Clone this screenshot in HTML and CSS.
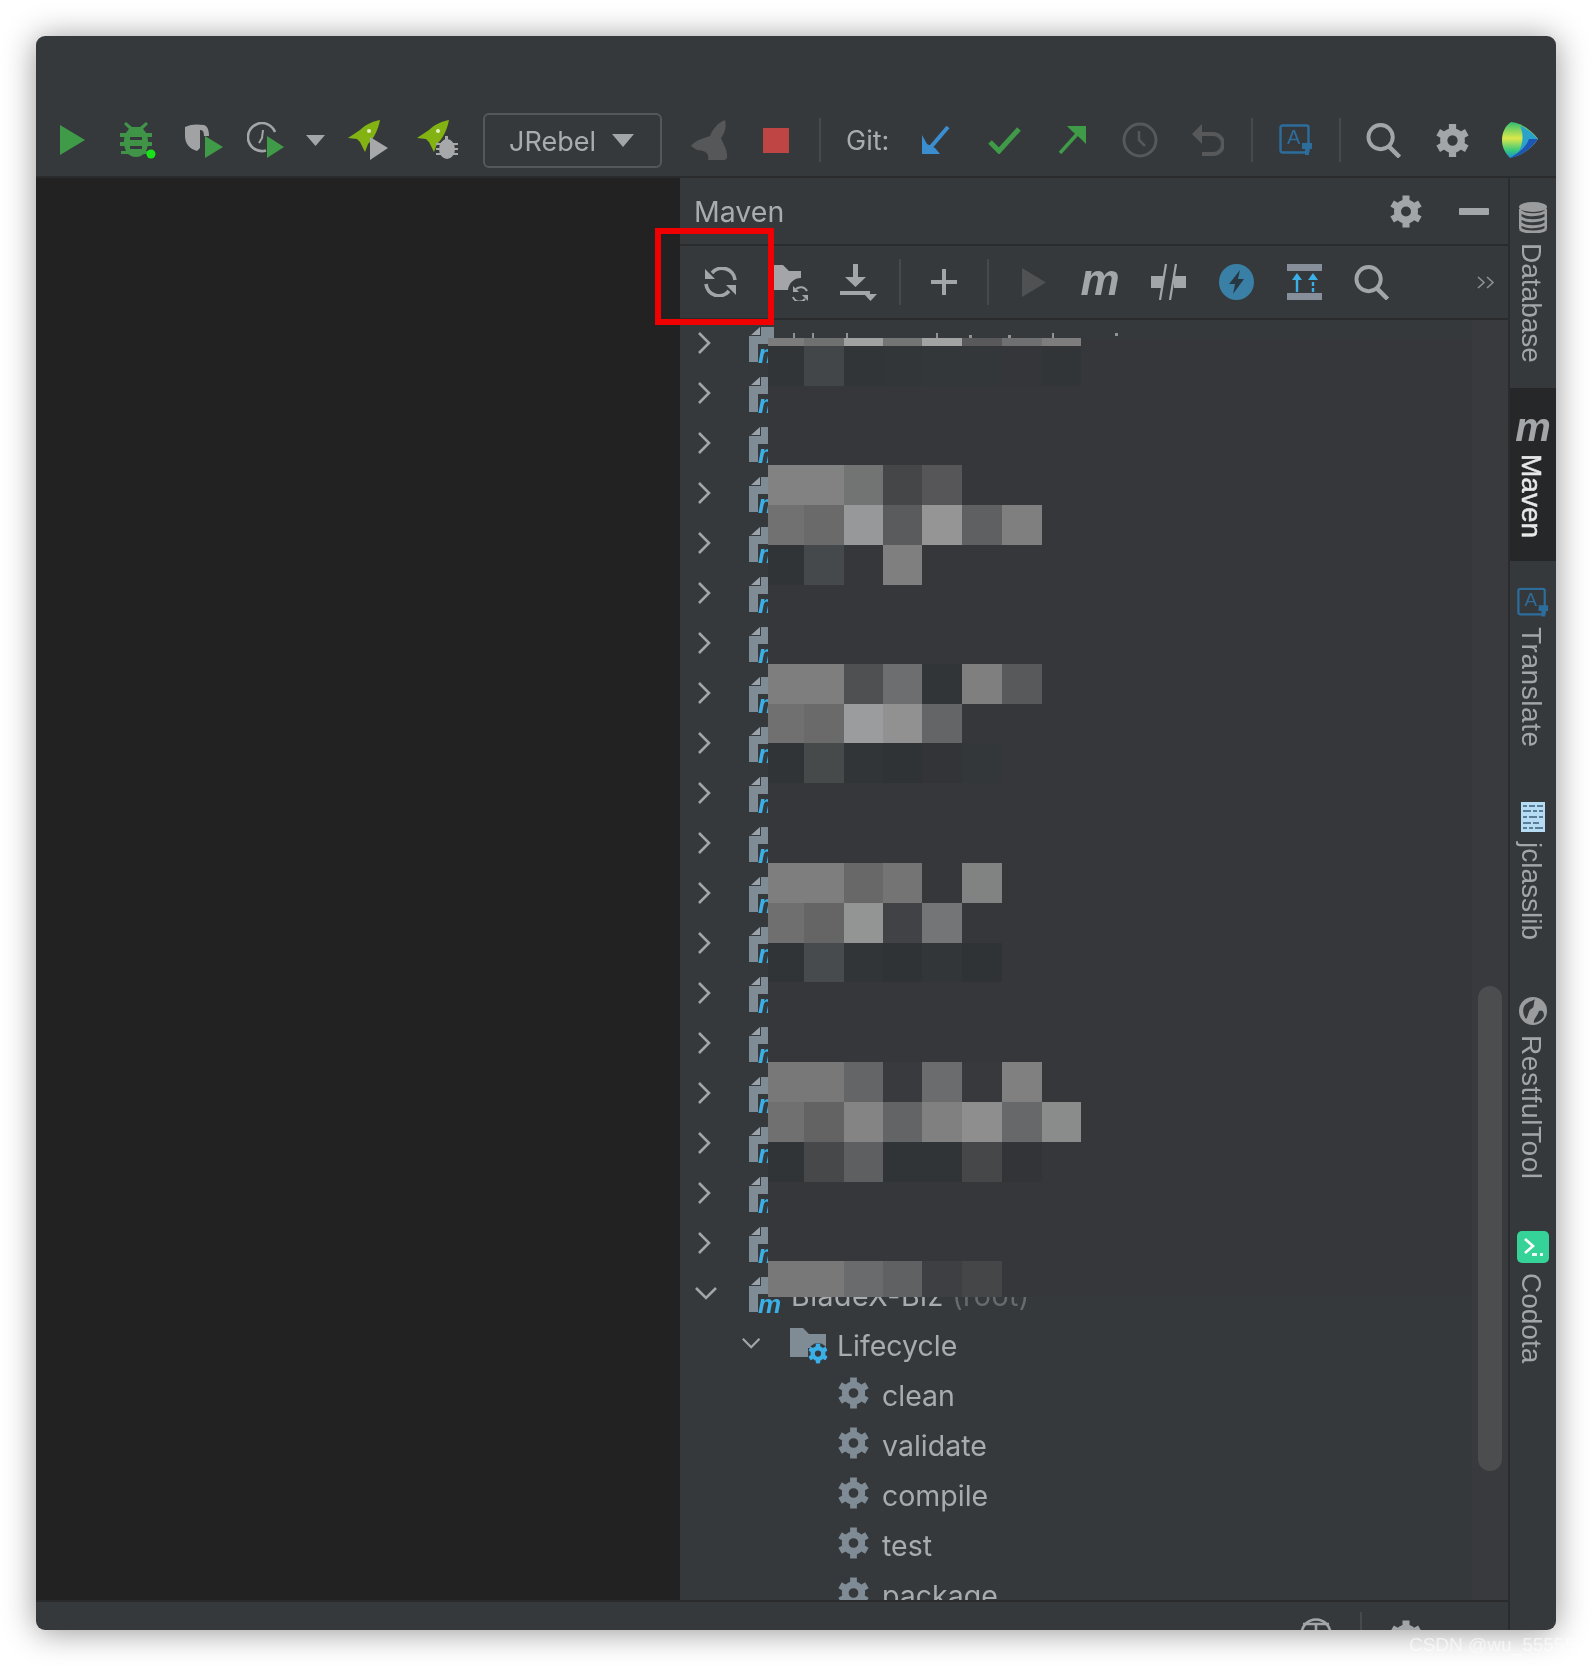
FILE: index.html
```html
<!DOCTYPE html>
<html lang="en">
<head>
<meta charset="utf-8">
<title>Maven</title>
<link rel="stylesheet" href="styles.css">
</head>
<body>
<svg class="defs" aria-hidden="true">
  <symbol id="gear" viewBox="0 0 32 32">
    <circle cx="16" cy="16" r="8.5" fill="none" stroke="currentColor" stroke-width="7"/>
    <g fill="currentColor">
      <rect x="12.5" y="0" width="7" height="8"/>
      <rect x="12.5" y="0" width="7" height="8" transform="rotate(60 16 16)"/>
      <rect x="12.5" y="0" width="7" height="8" transform="rotate(120 16 16)"/>
      <rect x="12.5" y="0" width="7" height="8" transform="rotate(180 16 16)"/>
      <rect x="12.5" y="0" width="7" height="8" transform="rotate(240 16 16)"/>
      <rect x="12.5" y="0" width="7" height="8" transform="rotate(300 16 16)"/>
    </g>
  </symbol>
  <symbol id="search" viewBox="0 0 36 36">
    <circle cx="14.5" cy="14.5" r="12.5" fill="none" stroke="currentColor" stroke-width="4"/>
    <path d="M23 24 L34 35" stroke="currentColor" stroke-width="4.5" fill="none"/>
  </symbol>
  <symbol id="chev" viewBox="0 0 24 24">
    <path d="M4 2 L14 12 L4 22" fill="none" stroke="#a3a6a8" stroke-width="2.6"/>
  </symbol>
  <symbol id="chevd" viewBox="0 0 24 24">
    <path d="M1 7 L11 17 L21 7" fill="none" stroke="#a3a6a8" stroke-width="2.6"/>
  </symbol>
  <symbol id="mod" viewBox="0 0 34 38">
    <path d="M0 10 H12 V1 H25 V18 H9 V36 H0Z" fill="#7f8b95"/>
    <path d="M2 9 L11 1 V9Z" fill="#9aa3ab"/>
  </symbol>
  <symbol id="translate" viewBox="0 0 34 32">
    <rect x="1.5" y="1.5" width="28" height="27" rx="2" fill="none" stroke="currentColor" stroke-width="2.4"/>
    <path d="M23 19 H33 V25 H30 V31 H26 V25 H23Z" fill="currentColor"/>
  </symbol>
</svg>

<main class="window">
  <header class="toolbar">
    <span class="btn"><svg width="25" height="30" viewBox="0 0 25 30"><path d="M0 0 L25 15 L0 30Z" fill="#3f9b47"/></svg></span>
    <span class="btn"><svg width="37" height="37" viewBox="0 0 37 37">
      <g fill="#3f9448">
        <path d="M6 0 L12 5 H20 L26 0 L28 2 L23 7 C26 10 28 14 28 20 C28 29 23 35 16 35 C9 35 4 29 4 20 C4 14 6 10 9 7 L4 2Z"/>
        <rect x="0" y="11" width="32" height="4"/><rect x="0" y="20" width="32" height="4"/><rect x="1" y="29" width="30" height="3"/>
      </g>
      <rect x="10" y="15" width="12" height="3" fill="#36393c"/><rect x="10" y="24" width="12" height="3" fill="#36393c"/>
      <circle cx="31" cy="32" r="4.5" fill="#17e317"/>
    </svg></span>
    <span class="btn"><svg width="38" height="36" viewBox="0 0 38 36">
      <path d="M0 5 C6 2 12 2 19 3 C22 4 24 7 24 14 H19 C19 10 18 8 15 8 V26 L12 29 C5 27 0 22 0 14Z" fill="#a0a2a4"/>
      <path d="M20 14 L38 25 L20 36Z" fill="#3f9b47"/>
    </svg></span>
    <span class="btn btn-profiler"><svg width="38" height="36" viewBox="0 0 38 36">
      <path d="M28 10 A14 14 0 1 0 19 28.5" fill="none" stroke="#a3a6a8" stroke-width="2.6"/>
      <path d="M16 8 L15 16 L12 21" fill="none" stroke="#a3a6a8" stroke-width="2"/>
      <path d="M20 14 L37 25 L20 36Z" fill="#3f9b47"/>
    </svg></span>
    <span class="btn btn-arrow"><svg width="19" height="11" viewBox="0 0 19 11"><path d="M0 0 H19 L9.500 11Z" fill="#a3a6a8"/></svg></span>
    <span class="btn"><svg width="40" height="40" viewBox="0 0 40 40">
      <path d="M32 0 C26 1 18 4 12 10 L0 18 L9 19 L12 22 L17 32 L20 24 C26 18 30 10 32 0Z" fill="#82b312"/>
      <circle cx="21" cy="11" r="2" fill="#e6f0c8"/>
      <path d="M22 17 L40 28 L22 40Z" fill="#a6a8aa"/>
    </svg></span>
    <span class="btn btn-wide"><svg width="41" height="40" viewBox="0 0 41 40">
      <path d="M32 0 C26 1 18 4 12 10 L0 18 L9 19 L12 22 L17 32 L20 24 C26 18 30 10 32 0Z" fill="#82b312"/>
      <circle cx="21" cy="11" r="2" fill="#e6f0c8"/>
      <g fill="#a6a8aa"><rect x="28" y="16" width="3" height="4"/><ellipse cx="30" cy="29" rx="8" ry="10"/><rect x="19" y="23" width="22" height="2"/><rect x="19" y="28" width="22" height="2"/><rect x="19" y="33" width="22" height="2"/></g>
    </svg></span>
    <div class="combo"><span class="combo-text">JRebel</span><svg width="22" height="13" viewBox="0 0 22 13"><path d="M0 0 H22 L11 13Z" fill="#a3a6a8"/></svg></div>
    <span class="btn btn-rabbit"><svg width="37" height="40" viewBox="0 0 37 40"><path d="M34 0 C36 8 33 14 30 18 C32 24 37 30 36 38 L34 40 H17 C19 34 14 30 6 30 L0 26 C4 20 14 18 19 16 C22 8 28 2 34 0Z" fill="#565758"/></svg></span>
    <span class="btn btn-68"><span class="stop"></span></span>
    <span class="sep"></span>
    <span class="git">Git:</span>
    <span class="btn btn-68"><svg width="28" height="28" viewBox="0 0 28 28"><path d="M26 1 L8 22" stroke="#3a8ecf" stroke-width="4" fill="none"/><path d="M0 9 L5 18 L13 22 L18 28 H0Z" fill="#3a8ecf"/></svg></span>
    <span class="btn btn-68"><svg width="33" height="27" viewBox="0 0 33 27"><path d="M2 15 L11 24 L31 2" stroke="#3f9b47" stroke-width="5" fill="none"/></svg></span>
    <span class="btn btn-68"><svg width="28" height="28" viewBox="0 0 28 28"><path d="M2 27 L21 6" stroke="#3f9b47" stroke-width="3.500" fill="none"/><path d="M9 0 H28 V18 L22 12 L15 6Z" fill="#3f9b47"/></svg></span>
    <span class="btn btn-68"><svg width="36" height="36" viewBox="0 0 36 36"><circle cx="18" cy="18" r="16" fill="none" stroke="#565859" stroke-width="3"/><path d="M17 9 V18 L23 24" stroke="#565859" stroke-width="2.500" fill="none"/></svg></span>
    <span class="btn btn-68"><svg width="32" height="32" viewBox="0 0 32 32"><path d="M5 10 H21 A10 10 0 0 1 21 30 H10" fill="none" stroke="#565859" stroke-width="4"/><path d="M10 0 V20 L0 10Z" fill="#565859"/></svg></span>
    <span class="sep sep-a"></span>
    <span class="btn btn-68 c-trans"><svg width="34" height="32" viewBox="0 0 34 32"><use href="#translate"/><text x="8" y="20" class="tr-a">A</text></svg></span>
    <span class="sep sep-a"></span>
    <span class="btn btn-68 c-gray"><svg width="36" height="35"><use href="#search"/></svg></span>
    <span class="btn btn-68 c-gray"><svg width="33" height="33"><use href="#gear"/></svg></span>
    <span class="btn btn-68"><svg width="36" height="36" viewBox="0 0 36 36">
      <defs><linearGradient id="lg" x1="0" y1="0" x2="0" y2="1"><stop offset="0" stop-color="#2fbf71"/><stop offset=".45" stop-color="#dbe84a"/><stop offset=".8" stop-color="#35c77e"/><stop offset="1" stop-color="#1f8fd0"/></linearGradient></defs>
      <path d="M9 0 C20 1 30 9 36 17 C30 26 20 34 8 36 C2 30 0 24 0 18 C0 11 3 4 9 0Z" fill="url(#lg)"/>
      <path d="M18 4 C25 6 31 11 36 17 L14 34 C20 26 23 14 18 4Z" fill="#2ba3c9"/>
      <path d="M36 17 C30 26 20 34 8 36 C14 32 24 26 27 17Z" fill="#1f55b4"/>
    </svg></span>
  </header>

  <div class="body">
    <div class="col">
      <div class="panels">
        <div class="editor"></div>
        <section class="maven">
          <div class="maven-head">
            <h1 class="maven-title">Maven</h1>
            <svg class="head-gear" width="32" height="33"><use href="#gear"/></svg>
            <span class="minimize"></span>
          </div>
          <div class="maven-tools">
            <span class="tool tool-first"><svg width="33" height="30" viewBox="0 0 33 30">
              <path d="M31 13 A13 13 0 0 0 8 6" fill="none" stroke="#a3a6a8" stroke-width="3.600"/><path d="M1 2 V12 H11Z" fill="#a3a6a8"/>
              <path d="M2 17 A13 13 0 0 0 25 24" fill="none" stroke="#a3a6a8" stroke-width="3.600"/><path d="M32 28 V18 H22Z" fill="#a3a6a8"/>
            </svg></span>
            <span class="tool tool-folder"><svg width="36" height="37" viewBox="0 0 36 37">
              <path d="M0 1 H9 L15 7 H27 V14 A13 13 0 0 0 14 26 H0Z" fill="#a3a5a8"/>
              <path d="M33 27 A7 7 0 0 0 22 25" fill="none" stroke="#a3a6a8" stroke-width="2"/><path d="M19 22 V28 H25Z" fill="#a3a6a8"/>
              <path d="M19 33 A7 7 0 0 0 31 35" fill="none" stroke="#a3a6a8" stroke-width="2"/><path d="M34 37 V31 H28Z" fill="#a3a6a8"/>
            </svg></span>
            <span class="tool tool-dl"><svg width="37" height="37" viewBox="0 0 37 37" class="ic-fill">
              <rect x="13" y="0" width="5" height="17"/><path d="M5 13 H26 L15.500 23Z"/><rect x="0" y="27" width="30" height="4"/><path d="M24 30 H37 L30.500 37Z"/>
            </svg></span>
            <span class="sep-2"></span>
            <span class="tool tool-plus"><svg width="26" height="26" viewBox="0 0 26 26" class="ic-fill"><rect x="11" y="0" width="4" height="26"/><rect x="0" y="11" width="26" height="4"/></svg></span>
            <span class="sep-2"></span>
            <span class="tool tool-play"><svg width="24" height="29" viewBox="0 0 24 29"><path d="M0 0 L24 14.500 L0 29Z" fill="#505153"/></svg></span>
            <span class="tool"><span class="italic-m">m</span></span>
            <span class="tool"><svg width="35" height="36" viewBox="0 0 35 36" class="ic-fill">
              <rect x="0" y="12" width="12" height="12"/><rect x="23" y="12" width="12" height="12"/>
              <path d="M9 36 L15 0 M19 36 L25 0" stroke="#a3a6a8" stroke-width="2.200" fill="none"/>
            </svg></span>
            <span class="tool"><svg width="35" height="36" viewBox="0 0 35 36"><ellipse cx="17.500" cy="18" rx="17.500" ry="18" fill="#3a80a6"/><path d="M21 6 L10 20 H16 L14 30 L25 15 H19Z" fill="#283843"/></svg></span>
            <span class="tool"><svg width="35" height="36" viewBox="0 0 35 36">
              <rect width="35" height="7" fill="#87909a"/><rect y="29" width="35" height="7" fill="#87909a"/>
              <path d="M10 28 V14" stroke="#3bb0e6" stroke-width="2.400"/><path d="M5 16 H15 L10 9Z" fill="#3bb0e6"/>
              <path d="M26 28 V14" stroke="#3bb0e6" stroke-width="2.400" stroke-dasharray="4 2"/><path d="M21 16 H31 L26 9Z" fill="#3bb0e6"/>
            </svg></span>
            <span class="tool c-gray"><svg width="36" height="35"><use href="#search"/></svg></span>
            <svg class="more" width="18" height="13" viewBox="0 0 18 13"><path d="M1 1 L7 6.500 L1 12 M10 1 L16 6.500 L10 12" fill="none" stroke="#8e9193" stroke-width="1.600"/></svg>
          </div>
          <div class="tree">
            <ul class="rows">
              <li class="row"><svg class="chev"><use href="#chev"/></svg><svg class="mod"><use href="#mod"/></svg><span class="m">m</span></li>
              <li class="row"><svg class="chev"><use href="#chev"/></svg><svg class="mod"><use href="#mod"/></svg><span class="m">m</span></li>
              <li class="row"><svg class="chev"><use href="#chev"/></svg><svg class="mod"><use href="#mod"/></svg><span class="m">m</span></li>
              <li class="row"><svg class="chev"><use href="#chev"/></svg><svg class="mod"><use href="#mod"/></svg><span class="m">m</span></li>
              <li class="row"><svg class="chev"><use href="#chev"/></svg><svg class="mod"><use href="#mod"/></svg><span class="m">m</span></li>
              <li class="row"><svg class="chev"><use href="#chev"/></svg><svg class="mod"><use href="#mod"/></svg><span class="m">m</span></li>
              <li class="row"><svg class="chev"><use href="#chev"/></svg><svg class="mod"><use href="#mod"/></svg><span class="m">m</span></li>
              <li class="row"><svg class="chev"><use href="#chev"/></svg><svg class="mod"><use href="#mod"/></svg><span class="m">m</span></li>
              <li class="row"><svg class="chev"><use href="#chev"/></svg><svg class="mod"><use href="#mod"/></svg><span class="m">m</span></li>
              <li class="row"><svg class="chev"><use href="#chev"/></svg><svg class="mod"><use href="#mod"/></svg><span class="m">m</span></li>
              <li class="row"><svg class="chev"><use href="#chev"/></svg><svg class="mod"><use href="#mod"/></svg><span class="m">m</span></li>
              <li class="row"><svg class="chev"><use href="#chev"/></svg><svg class="mod"><use href="#mod"/></svg><span class="m">m</span></li>
              <li class="row"><svg class="chev"><use href="#chev"/></svg><svg class="mod"><use href="#mod"/></svg><span class="m">m</span></li>
              <li class="row"><svg class="chev"><use href="#chev"/></svg><svg class="mod"><use href="#mod"/></svg><span class="m">m</span></li>
              <li class="row"><svg class="chev"><use href="#chev"/></svg><svg class="mod"><use href="#mod"/></svg><span class="m">m</span></li>
              <li class="row"><svg class="chev"><use href="#chev"/></svg><svg class="mod"><use href="#mod"/></svg><span class="m">m</span></li>
              <li class="row"><svg class="chev"><use href="#chev"/></svg><svg class="mod"><use href="#mod"/></svg><span class="m">m</span></li>
              <li class="row"><svg class="chev"><use href="#chev"/></svg><svg class="mod"><use href="#mod"/></svg><span class="m">m</span></li>
              <li class="row"><svg class="chev"><use href="#chev"/></svg><svg class="mod"><use href="#mod"/></svg><span class="m">m</span></li>
              <li class="row"><svg class="chev"><use href="#chevd"/></svg><svg class="mod"><use href="#mod"/></svg><span class="m">m</span><span class="label label-root">BladeX-Biz <span class="dim">(root)</span></span></li>
              <li class="row row-l1"><svg class="chev chev-l1"><use href="#chevd"/></svg><svg class="folder" width="38" height="36" viewBox="0 0 38 36"><path d="M0 0 H13 L19 6 H36 V20 H18 V29 H0Z" fill="#7f8b95"/></svg><svg class="folder-gear" width="20" height="21"><use href="#gear"/></svg><span class="label label-l1">Lifecycle</span></li>
              <li class="row row-l2"><svg class="task" width="31" height="32"><use href="#gear"/></svg><span class="label label-l2">clean</span></li>
              <li class="row row-l2"><svg class="task" width="31" height="32"><use href="#gear"/></svg><span class="label label-l2">validate</span></li>
              <li class="row row-l2"><svg class="task" width="31" height="32"><use href="#gear"/></svg><span class="label label-l2">compile</span></li>
              <li class="row row-l2"><svg class="task" width="31" height="32"><use href="#gear"/></svg><span class="label label-l2">test</span></li>
              <li class="row row-l2"><svg class="task" width="31" height="32"><use href="#gear"/></svg><span class="label label-l2">package</span></li>
            </ul>
            <div class="track"><div class="thumb"></div></div>
            <svg class="mosaic" width="704" height="959" viewBox="0 0 704 959">
              <rect width="704" height="959" fill="#36373b"/>
              <g fill="#919293"><rect x="25" y="-5" width="2" height="5"/><rect x="44" y="-5" width="2" height="5"/><rect x="78" y="-5" width="2" height="5"/><rect x="168" y="-5" width="2" height="5"/><rect x="201" y="-3" width="3" height="3"/><rect x="240" y="-3" width="3" height="3"/><rect x="284" y="-5" width="2" height="5"/><rect x="347" y="-5" width="3" height="3"/></g>
              <g>
                <rect x="0" y="0" width="36" height="8" fill="#7c7c7c"/><rect x="36" y="0" width="40" height="8" fill="#6f7070"/><rect x="76" y="0" width="39" height="8" fill="#a0a1a1"/><rect x="115" y="0" width="39" height="8" fill="#737474"/><rect x="154" y="0" width="40" height="8" fill="#a2a3a3"/><rect x="194" y="0" width="40" height="8" fill="#59595b"/><rect x="234" y="0" width="40" height="8" fill="#6f7071"/><rect x="274" y="0" width="39" height="8" fill="#7d7d7e"/>
                <rect x="0" y="8" width="36" height="40" fill="#323537"/><rect x="36" y="8" width="40" height="40" fill="#434648"/><rect x="76" y="8" width="39" height="40" fill="#323537"/><rect x="115" y="8" width="39" height="40" fill="#333638"/><rect x="154" y="8" width="40" height="40" fill="#34373a"/><rect x="194" y="8" width="40" height="40" fill="#34373a"/><rect x="234" y="8" width="40" height="40" fill="#35363a"/><rect x="274" y="8" width="39" height="40" fill="#323537"/>
              </g>
              <g>
                <rect x="0" y="127" width="76" height="40" fill="#828282"/><rect x="76" y="127" width="39" height="40" fill="#727373"/><rect x="115" y="127" width="39" height="40" fill="#454648"/><rect x="154" y="127" width="40" height="40" fill="#565658"/>
                <rect x="0" y="167" width="36" height="40" fill="#717171"/><rect x="36" y="167" width="40" height="40" fill="#6a6a6a"/><rect x="76" y="167" width="39" height="40" fill="#979899"/><rect x="115" y="167" width="39" height="40" fill="#5a5b5d"/><rect x="154" y="167" width="40" height="40" fill="#959596"/><rect x="194" y="167" width="40" height="40" fill="#5f6062"/><rect x="234" y="167" width="40" height="40" fill="#7f7f7f"/>
                <rect x="0" y="207" width="36" height="40" fill="#313437"/><rect x="36" y="207" width="40" height="40" fill="#45494b"/><rect x="76" y="207" width="39" height="40" fill="#35373a"/><rect x="115" y="207" width="39" height="40" fill="#7f7f7f"/>
              </g>
              <g>
                <rect x="0" y="326" width="76" height="40" fill="#7e7e7e"/><rect x="76" y="326" width="39" height="40" fill="#4f5052"/><rect x="115" y="326" width="39" height="40" fill="#6d6e6f"/><rect x="154" y="326" width="40" height="40" fill="#323538"/><rect x="194" y="326" width="40" height="40" fill="#7f7f80"/><rect x="234" y="326" width="40" height="40" fill="#58595b"/>
                <rect x="0" y="366" width="36" height="39" fill="#707070"/><rect x="36" y="366" width="40" height="39" fill="#6a6a6b"/><rect x="76" y="366" width="39" height="39" fill="#9b9c9d"/><rect x="115" y="366" width="39" height="39" fill="#909190"/><rect x="154" y="366" width="40" height="39" fill="#646567"/>
                <rect x="0" y="405" width="36" height="40" fill="#313437"/><rect x="36" y="405" width="40" height="40" fill="#464a4b"/><rect x="76" y="405" width="39" height="40" fill="#323538"/><rect x="115" y="405" width="39" height="40" fill="#303336"/><rect x="154" y="405" width="40" height="40" fill="#323438"/><rect x="194" y="405" width="40" height="40" fill="#34373a"/>
              </g>
              <g>
                <rect x="0" y="525" width="76" height="40" fill="#7e7e7e"/><rect x="76" y="525" width="39" height="40" fill="#686869"/><rect x="115" y="525" width="39" height="40" fill="#747475"/><rect x="154" y="525" width="40" height="40" fill="#35373a"/><rect x="194" y="525" width="40" height="40" fill="#818282"/>
                <rect x="0" y="565" width="36" height="40" fill="#6f6f70"/><rect x="36" y="565" width="40" height="40" fill="#656566"/><rect x="76" y="565" width="39" height="40" fill="#939494"/><rect x="115" y="565" width="39" height="40" fill="#414245"/><rect x="154" y="565" width="40" height="40" fill="#747576"/>
                <rect x="0" y="605" width="36" height="39" fill="#313437"/><rect x="36" y="605" width="40" height="39" fill="#474b4d"/><rect x="76" y="605" width="39" height="39" fill="#323538"/><rect x="115" y="605" width="39" height="39" fill="#303336"/><rect x="154" y="605" width="40" height="39" fill="#333639"/><rect x="194" y="605" width="40" height="39" fill="#303336"/>
              </g>
              <g>
                <rect x="0" y="724" width="76" height="40" fill="#787878"/><rect x="76" y="724" width="39" height="40" fill="#646566"/><rect x="115" y="724" width="39" height="40" fill="#383a3d"/><rect x="154" y="724" width="40" height="40" fill="#6b6c6d"/><rect x="194" y="724" width="40" height="40" fill="#38393c"/><rect x="234" y="724" width="40" height="40" fill="#808080"/>
                <rect x="0" y="764" width="36" height="40" fill="#707070"/><rect x="36" y="764" width="40" height="40" fill="#636364"/><rect x="76" y="764" width="39" height="40" fill="#848485"/><rect x="115" y="764" width="39" height="40" fill="#636465"/><rect x="154" y="764" width="40" height="40" fill="#808080"/><rect x="194" y="764" width="40" height="40" fill="#8e8e8e"/><rect x="234" y="764" width="40" height="40" fill="#676869"/><rect x="274" y="764" width="39" height="40" fill="#8a8b8b"/>
                <rect x="0" y="804" width="36" height="40" fill="#313437"/><rect x="36" y="804" width="40" height="40" fill="#47484a"/><rect x="76" y="804" width="39" height="40" fill="#5e5f60"/><rect x="115" y="804" width="39" height="40" fill="#313437"/><rect x="154" y="804" width="40" height="40" fill="#313437"/><rect x="194" y="804" width="40" height="40" fill="#464749"/><rect x="234" y="804" width="40" height="40" fill="#323437"/><rect x="274" y="804" width="80" height="40" fill="#35373a"/>
              </g>
              <g>
                <rect x="0" y="923" width="76" height="36" fill="#787878"/><rect x="76" y="923" width="39" height="36" fill="#6a6b6c"/><rect x="115" y="923" width="39" height="36" fill="#606163"/><rect x="154" y="923" width="40" height="36" fill="#3e3f42"/><rect x="194" y="923" width="40" height="36" fill="#454648"/>
              </g>
            </svg>
          </div>
        </section>
      </div>
      <footer class="statusbar">
        <svg class="st-globe" width="32" height="32" viewBox="0 0 32 32"><circle cx="16" cy="16" r="14.500" fill="none" stroke="#a3a6a8" stroke-width="2.600"/><path d="M3 6 H29 M16 6 V30" stroke="#a3a6a8" stroke-width="2.600"/></svg>
        <span class="st-sep"></span>
        <svg class="st-gear" width="32" height="33"><use href="#gear"/></svg>
      </footer>
    </div>

    <aside class="stripe">
      <div class="strip strip-first">
        <svg width="28" height="31" viewBox="0 0 28 31"><ellipse cx="14" cy="5" rx="14" ry="5" fill="#9a9c9e"/><path d="M1 9 C6 14 22 14 27 9 M1 15 C6 20 22 20 27 15 M1 21 C6 26 22 26 27 21 M1 27 C6 31 22 31 27 27 M1 7 V27 M27 7 V27" fill="none" stroke="#9a9c9e" stroke-width="3"/></svg>
        <span class="strip-text">Database</span>
      </div>
      <div class="strip strip-active">
        <span class="strip-m">m</span>
        <span class="strip-text strip-text-active">Maven</span>
      </div>
      <div class="strip strip-translate">
        <svg class="c-trans" width="32" height="31" viewBox="0 0 34 32"><use href="#translate"/><text x="8" y="20" class="tr-a">A</text></svg>
        <span class="strip-text strip-text-spaced">Translate</span>
      </div>
      <div class="strip">
        <svg width="24" height="30" viewBox="0 0 24 30">
          <rect width="24" height="30" fill="#b5dcf2"/>
          <g fill="#5a7d98"><rect x="2" y="3" width="4" height="2"/><rect x="8" y="3" width="6" height="2"/><rect x="16" y="3" width="6" height="2"/><rect x="2" y="8" width="8" height="2"/><rect x="12" y="8" width="4" height="2"/><rect x="18" y="8" width="4" height="2"/><rect x="2" y="14" width="4" height="2"/><rect x="8" y="14" width="8" height="2"/><rect x="18" y="14" width="4" height="2"/><rect x="2" y="20" width="8" height="2"/><rect x="12" y="20" width="6" height="2"/><rect x="2" y="25" width="4" height="2"/><rect x="8" y="25" width="4" height="2"/><rect x="14" y="25" width="8" height="2"/></g>
        </svg>
        <span class="strip-text">jclasslib</span>
      </div>
      <div class="strip strip-rest">
        <svg width="28" height="28" viewBox="0 0 28 28"><circle cx="14" cy="14" r="14" fill="#9a9c9e"/><path d="M6 8 C10 4 14 4 16 2 C14 8 16 10 12 12 C9 14 10 18 7 22 C4 18 3 12 6 8Z M20 14 C24 12 25 16 25 19 C22 24 18 25 15 26 C14 22 18 20 20 14Z" fill="#36393c"/></svg>
        <span class="strip-text strip-text-spaced">RestfulTool</span>
      </div>
      <div class="strip strip-codota">
        <svg width="32" height="32" viewBox="0 0 32 32"><rect width="32" height="32" rx="5" fill="#36d399"/><path d="M8 8 L16 15 L8 22" fill="none" stroke="#ffffff" stroke-width="2.600"/><rect x="15" y="22" width="5" height="3" fill="#e9fff6"/><rect x="23" y="22" width="3" height="3" fill="#e9fff6"/></svg>
        <span class="strip-text">Codota</span>
      </div>
    </aside>
  </div>
  <div class="redbox"></div>
</main>
<div class="watermark">CSDN @wu_55555</div>
</body>
</html>
```
FILE: styles.css
```css
* { box-sizing: border-box; }
html, body { margin: 0; padding: 0; }
body {
  width: 1592px;
  height: 1666px;
  padding: 36px;
  background: #ffffff;
  overflow: hidden;
  position: relative;
  font-family: Inter, "Liberation Sans", sans-serif;
  color: #a9acae;
}
.defs { position: absolute; width: 0; height: 0; }
.tr-a { font: 20px "Liberation Sans", sans-serif; fill: currentColor; }

.window {
  position: relative;
  width: 1520px;
  height: 1594px;
  display: flex;
  flex-direction: column;
  background: #36393c;
  border-radius: 9px;
  box-shadow: 0 2px 32px rgba(0, 0, 0, .42);
  filter: blur(.6px);
}

/* main toolbar */
.toolbar {
  flex: none;
  height: 142px;
  padding: 70px 0 2px 3px;
  display: flex;
  align-items: center;
  border-bottom: 2px solid #2a2b2d;
}
.btn { flex: none; width: 66px; display: flex; align-items: center; justify-content: center; }
.btn-profiler { width: 58px; }
.btn-arrow { width: 40px; }
.btn-wide { width: 72px; }
.btn-68 { width: 68px; }
.btn-rabbit { margin-left: 14px; }
.combo {
  flex: none;
  width: 179px;
  height: 55px;
  margin-left: 10px;
  padding: 0 26px 0 24px;
  display: flex;
  align-items: center;
  justify-content: space-between;
  border: 2px solid #55585a;
  border-radius: 6px;
}
.combo-text { font-size: 27px; padding-top: 3px; color: #a9acae; }
.stop { width: 26px; height: 25px; background: #bf4545; }
.sep { flex: none; width: 2px; height: 44px; margin-left: 9px; background: #47494b; }
.sep-a { margin-right: 9px; }
.git { flex: none; width: 56px; margin-left: 25px; font-size: 27px; color: #a9acae; }
.c-trans { color: #2c6d9c; }
.c-gray { color: #a3a6a8; }

/* layout */
.body { flex: 1; min-height: 0; display: flex; }
.col { flex: 1; min-width: 0; display: flex; flex-direction: column; }
.panels { flex: 1; min-height: 0; display: flex; }
.editor { flex: none; width: 644px; background: #222222; }
.maven { flex: 1; min-width: 0; display: flex; flex-direction: column; }

.maven-head {
  flex: none;
  height: 68px;
  padding: 0 19px 0 14px;
  display: flex;
  align-items: center;
  border-bottom: 2px solid #2a2b2d;
  color: #a3a6a8;
}
.maven-title { margin: 0 auto 0 0; font-size: 28.5px; font-weight: 400; color: #a9acae; }
.head-gear { margin-right: 37px; }
.minimize { width: 30px; height: 7px; background: #a3a6a8; border-radius: 1px; }

.maven-tools {
  flex: none;
  height: 74px;
  padding-left: 6px;
  display: flex;
  align-items: center;
  border-bottom: 2px solid #2a2b2d;
}
.tool { flex: none; width: 68px; display: flex; align-items: center; justify-content: center; }
.tool-folder { margin-left: 4px; }
.tool-dl { width: 64px; }
.tool-plus { margin-left: 9px; }
.tool-play { width: 64px; margin-left: 13px; }
.sep-2 { flex: none; width: 2px; height: 46px; margin-left: 9px; background: #47494b; }
.ic-fill { fill: #a3a6a8; }
.italic-m { font: italic bold 44px/1 "Liberation Sans", sans-serif; color: #a3a6a8; margin-top: -5px; }
.more { margin-left: auto; margin-right: 13px; }

/* tree */
.tree { position: relative; flex: 1; min-height: 0; display: flex; overflow: hidden; }
.rows { flex: 1; min-width: 0; margin: -2px 0 0; padding: 0; list-style: none; }
.row { height: 50px; padding-left: 15px; display: flex; align-items: center; position: relative; }
.chev { flex: none; width: 24px; height: 24px; }
.mod { flex: none; width: 34px; height: 38px; margin-left: 30px; margin-top: 3px; }
.m {
  flex: none;
  align-self: flex-end;
  width: 25px;
  margin: 0 0 1px -25px;
  font: italic bold 26px/26px "Liberation Sans", sans-serif;
  color: #3bb0e6;
}
.label { font-size: 28.5px; padding-top: 4px; white-space: nowrap; color: #a9acae; }
.label-root { margin-left: 8px; letter-spacing: .5px; }
.dim { color: #686b6e; }
.row-l1 { padding-left: 62px; }
.chev-l1 { width: 20px; height: 20px; }
.folder { flex: none; margin-left: 28px; margin-top: 6px; }
.folder-gear { flex: none; margin-left: -20px; margin-top: 20px; color: #3bb0e6; background: #36393c; border-radius: 50%; }
.label-l1 { margin-left: 9px; }
.row-l2 { padding-left: 158px; }
.task { flex: none; color: #7f8b95; }
.label-l2 { margin-left: 13px; }
.track { flex: none; width: 36px; padding: 666px 6px 0; background: #393a3d; }
.thumb { height: 485px; border-radius: 12px; background: #4b4d4f; }
.mosaic { position: absolute; left: 88px; top: 18px; overflow: visible; }

/* status bar */
.statusbar {
  flex: none;
  height: 30px;
  padding-right: 86px;
  display: flex;
  justify-content: flex-end;
  align-items: flex-start;
  overflow: hidden;
  border-top: 2px solid #2a2b2d;
  color: #a3a6a8;
}
.st-globe { flex: none; margin-top: 16px; margin-right: 28px; }
.st-sep { flex: none; width: 2px; height: 20px; margin-top: 10px; margin-right: 28px; background: #47494b; }
.st-gear { flex: none; margin-top: 18px; }

/* right stripe */
.stripe { flex: none; width: 48px; border-left: 2px solid #2a2b2d; display: flex; flex-direction: column; }
.strip { padding: 27px 0; display: flex; flex-direction: column; align-items: center; gap: 10px; }
.strip-first { padding: 24px 0 25px; }
.strip-active { padding: 28px 0 23px; background: #262728; gap: 14px; }
.strip-translate { margin-top: -1px; gap: 9px; }
.strip-rest { margin-top: 3px; }
.strip-codota { margin-top: -2px; }
.strip-text {
  writing-mode: vertical-rl;
  margin-right: 4px;
  font: 28px/1 "Liberation Sans", sans-serif;
  font-kerning: none;
  color: #a3a6a8;
  white-space: nowrap;
}
.strip-text-spaced { letter-spacing: .55px; }
.strip-text-active { color: #e8e8e8; -webkit-text-stroke: .5px #e8e8e8; }
.strip-m { height: 26px; font: italic bold 40px/26px "Liberation Sans", sans-serif; color: #a3a6a8; margin-top: -2px; }

/* annotation */
.redbox { position: absolute; left: 619px; top: 192px; width: 119px; height: 97px; border: 6px solid #f00000; }
.watermark { position: absolute; right: 17px; bottom: 10px; font: 19px "Liberation Sans", sans-serif; color: rgba(255, 255, 255, .6); }
```
